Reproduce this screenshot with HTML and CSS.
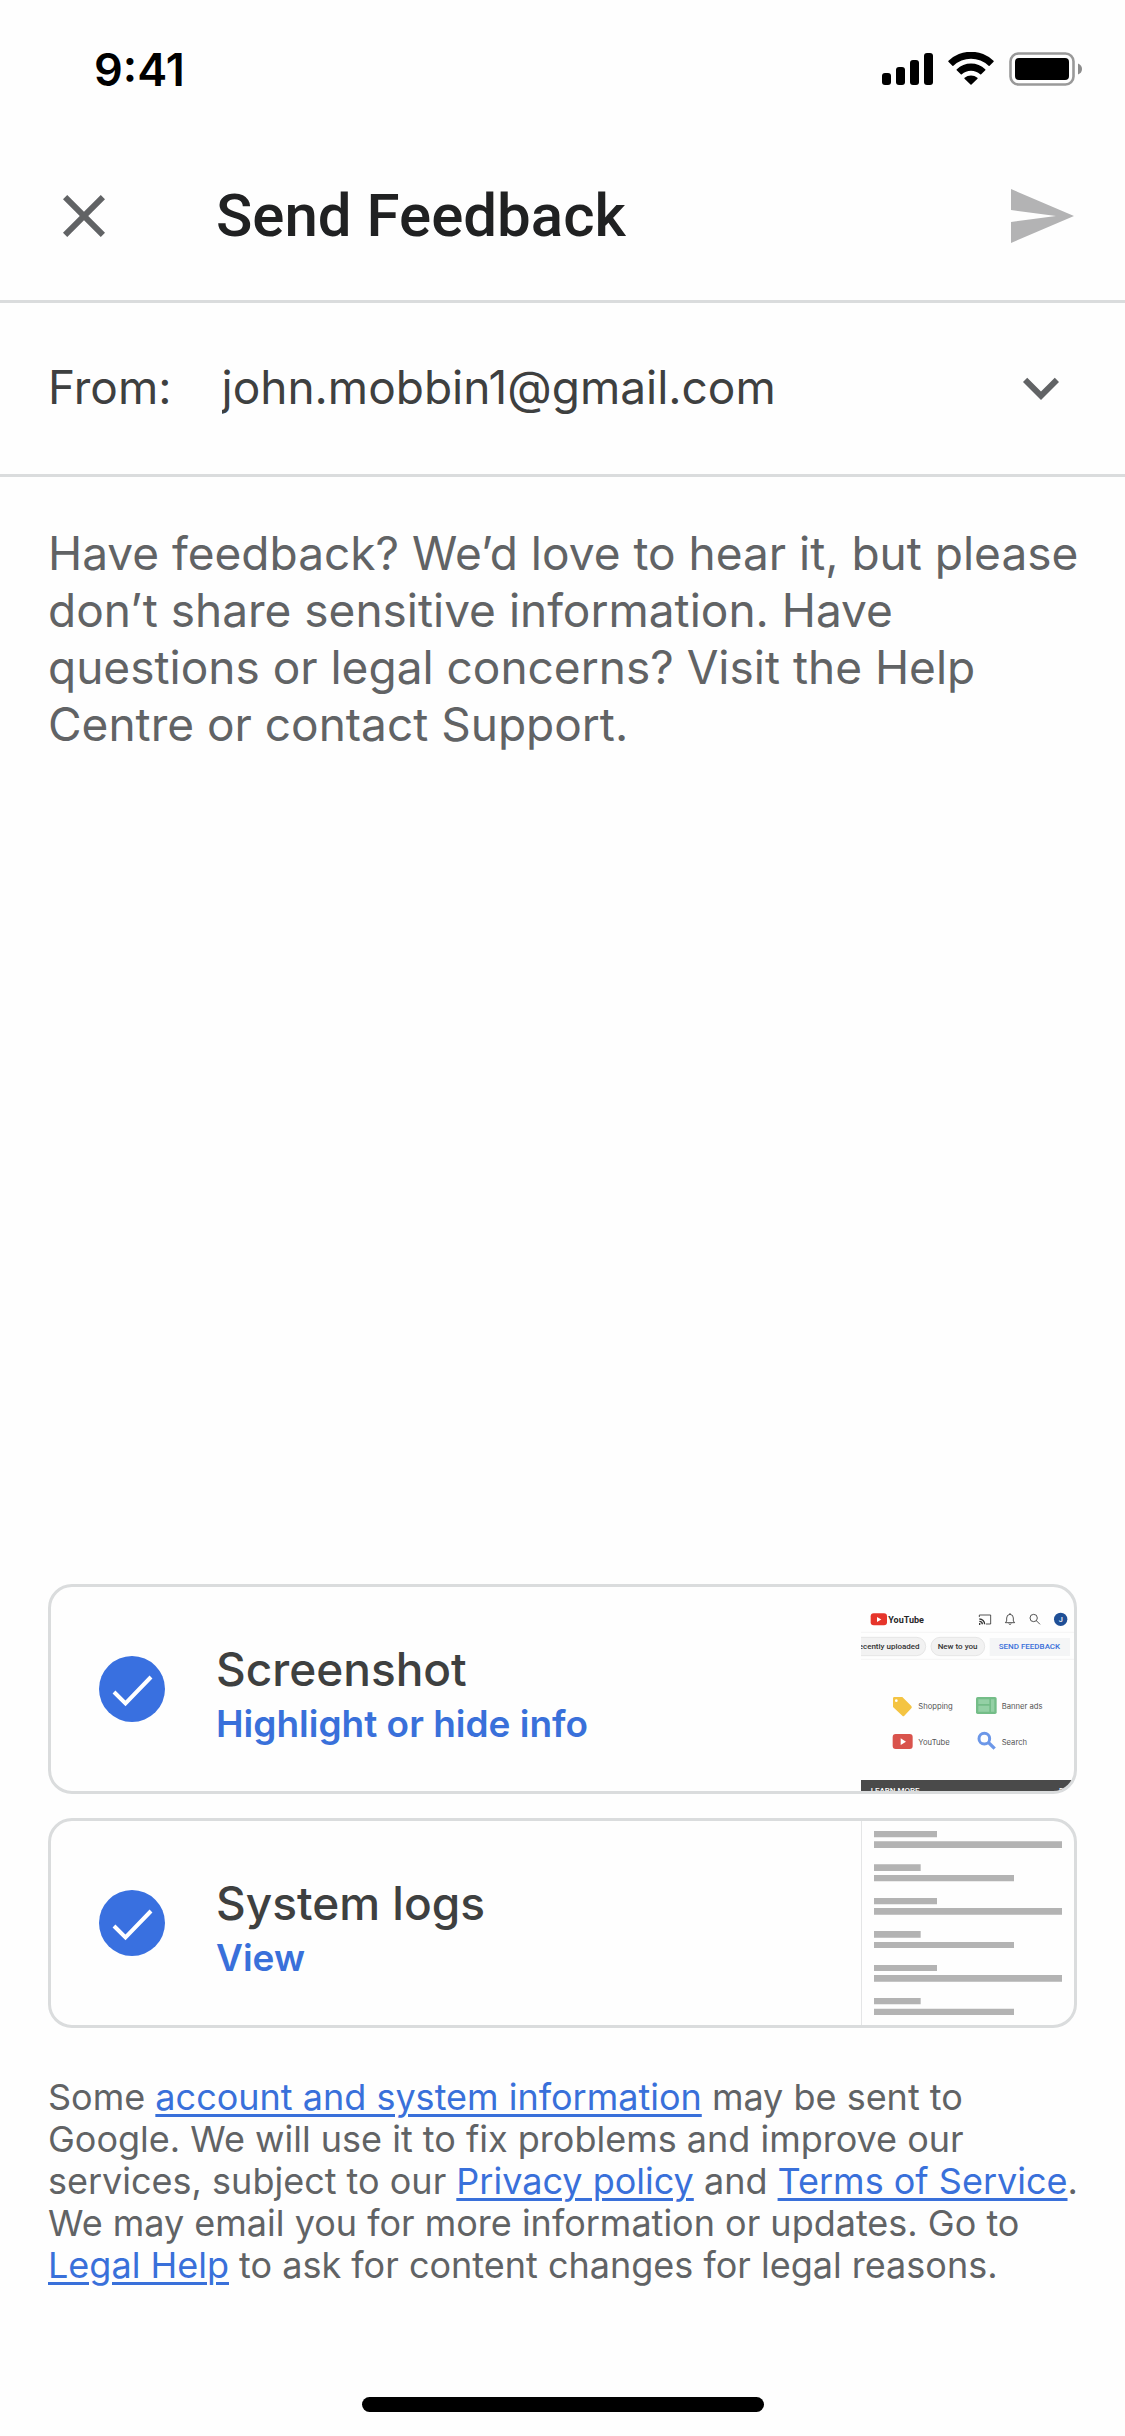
FILE: index.html
```html
<!DOCTYPE html>
<html lang="en">
<head>
<meta charset="utf-8">
<meta name="viewport" content="width=device-width">
<title>Send Feedback</title>
<link rel="stylesheet" href="styles.css">
</head>
<body>
<div class="status-bar">
  <span class="time">9:41</span>
  <div class="status-icons">
    <svg width="51" height="34" viewBox="0 0 51 34" role="img" aria-label="Signal"><rect y="21" width="9" height="12" rx="3"/><rect x="14" y="15" width="9" height="18" rx="3"/><rect x="28" y="8" width="9" height="25" rx="3"/><rect x="42" y="1" width="9" height="32" rx="3"/></svg>
    <svg width="46" height="34" viewBox="0 0 46 34" role="img" aria-label="Wi-Fi"><path d="M0.4 9.7Q0 9.3.5 8.800A32.500 32.500 0 0 1 45.500 8.800Q46 9.300 45.600 9.700L41.600 13.800Q41.100 14.200 40.600 13.800A25.500 25.500 0 0 0 5.400 13.800Q4.900 14.200 4.400 13.800ZM8.700 18.200Q8.300 17.700 8.800 17.300A20.600 20.600 0 0 1 37.200 17.300Q37.700 17.700 37.300 18.200L33.200 22.300Q32.700 22.700 32.200 22.300A13.700 13.700 0 0 0 13.800 22.300Q13.300 22.700 12.800 22.300ZM16.500 26.700Q16.100 26.200 16.600 25.800A9.800 9.800 0 0 1 29.400 25.800Q29.900 26.200 29.500 26.700L23.500 32.600Q23 33 22.500 32.600Z"/></svg>
    <svg width="73" height="34" viewBox="0 0 73 34" role="img" aria-label="Battery"><rect x="1.500" y="1.500" width="63" height="31" rx="8" fill="none" stroke="#999" stroke-width="2.600"/><rect x="6" y="6" width="54" height="22" rx="4"/><path d="M69 11.500Q73 13 73 17T69 22.500Z" fill="#8c8c8c"/></svg>
  </div>
</div>

<form class="feedback">
  <header class="app-bar">
    <button type="button" class="icon-button close" aria-label="Close">
      <svg viewBox="0 0 24 24"><path d="M19 6.410L17.590 5 12 10.590 6.410 5 5 6.410 10.590 12 5 17.590 6.410 19 12 13.410 17.590 19 19 17.590 13.410 12z"/></svg>
    </button>
    <h1 class="title">Send Feedback</h1>
    <button type="submit" class="icon-button send" aria-label="Send">
      <svg viewBox="0 0 24 24"><path d="M2 21L23 12 2 3V10L17 12 2 14z"/></svg>
    </button>
  </header>

  <div class="from-row">
    <label for="from">From:</label>
    <select id="from" class="from-select"><option>john.mobbin1@gmail.com</option></select>
    <svg class="chevron" viewBox="0 0 24 24" aria-hidden="true"><path d="M16.590 8.590L12 13.170 7.410 8.590 6 10l6 6 6-6z"/></svg>
  </div>

  <textarea class="message" aria-label="Feedback" placeholder="Have feedback? We’d love to hear it, but please don’t share sensitive information. Have questions or legal concerns? Visit the Help Centre or contact Support."></textarea>

  <div class="attachments">
    <section class="card">
      <span class="check">
        <input type="checkbox" id="shot" checked>
        <svg viewBox="0 0 66 66" aria-hidden="true"><path d="M15 36L26.500 47.500 52 21" fill="none" stroke="#fff" stroke-width="4"/></svg>
      </span>
      <div class="card-text">
        <label for="shot">Screenshot</label>
        <a href="#highlight">Highlight or hide info</a>
      </div>
      <svg class="thumb" viewBox="0 0 639 612" role="img" aria-label="Screenshot preview">
        <rect x="29" y="79" width="49" height="36" rx="9" fill="#e6352b"/><path d="M48 90V105L61 97.500z" fill="#fff"/>
        <text x="82" y="108" class="t-logo">YouTube</text>
        <g fill="none" stroke="#333" stroke-width="2.500">
          <path d="M355 90V84H389V111H375"/><path d="M355 96A16 16 0 0 1 371 112M355 103A9 9 0 0 1 364 112" stroke-width="4"/>
          <path d="M433 107H461L457 102V93Q457 83 447 82Q437 83 437 93V102ZM443 110Q447 115 451 110M447 82V78"/>
          <circle cx="518" cy="93" r="11"/><path d="M526 101L537 112"/>
        </g>
        <path d="M354 109h4v4h-4z"/>
        <circle cx="599" cy="97" r="20" fill="#1f4f96"/><text x="599" y="105" class="t-avatar">J</text>
        <path d="M0 136H639M0 217H639" stroke="#eee" stroke-width="2"/>
        <rect x="-60" y="151" width="254" height="55" rx="27" fill="#f2f2f2" stroke="#ddd" stroke-width="2"/>
        <rect x="210" y="151" width="161" height="55" rx="27" fill="#f2f2f2" stroke="#ddd" stroke-width="2"/>
        <rect x="386" y="153" width="241" height="54" fill="#f4f5f6"/>
        <text x="-7" y="186" class="t-chip">ecently uploaded</text>
        <text x="230" y="186" class="t-chip">New to you</text>
        <text x="413" y="187" class="t-send">SEND FEEDBACK</text>
        <path d="M96 334Q96 330 100 330H124L151 357Q154 361 151 364L130 386Q127 389 124 386L96 360Z" fill="#f4c443"/><circle cx="106" cy="341" r="4" fill="#fff"/>
        <rect x="345" y="330" width="62" height="51" rx="5" fill="#74bd88"/><path d="M352 337H385V351H352ZM352 356H385V374H352ZM390 337H400V374H390Z" fill="#94d0a5"/>
        <rect x="95" y="441" width="60" height="45" rx="9" fill="#d9534c"/><path d="M119 454V474L135 464z" fill="#fff"/>
        <g fill="none" stroke="#6c97e8"><circle cx="370" cy="455" r="16" stroke-width="9"/><path d="M382 466L401 485" stroke-width="10"/></g>
        <text x="172" y="365" class="t-label">Shopping</text>
        <text x="422" y="365" class="t-label">Banner ads</text>
        <text x="172" y="473" class="t-label">YouTube</text>
        <text x="422" y="473" class="t-label">Search</text>
        <rect y="579" width="639" height="33" fill="#4a4a4a"/>
        <text x="29" y="618" class="t-foot">LEARN MORE</text>
        <text x="594" y="618" class="t-foot">FE</text>
      </svg>
    </section>

    <section class="card">
      <span class="check">
        <input type="checkbox" id="logs" checked>
        <svg viewBox="0 0 66 66" aria-hidden="true"><path d="M15 36L26.500 47.500 52 21" fill="none" stroke="#fff" stroke-width="4"/></svg>
      </span>
      <div class="card-text">
        <label for="logs">System logs</label>
        <a href="#logs">View</a>
      </div>
      <svg class="thumb" viewBox="0 0 639 612" role="img" aria-label="System logs preview">
        <path d="M1.500 0V612" stroke="#e4e5e6" stroke-width="3"/>
        <path fill="#b3b3b3" d="M39 30h189v19H39zM39 61h564v20H39zM39 130h140v20H39zM39 162h420v19H39zM39 231h189v19H39zM39 261h564v20H39zM39 330h140v20H39zM39 363h420v18H39zM39 432h189v18H39zM39 462h564v20H39zM39 531h140v19H39zM39 563h420v19H39z"/>
      </svg>
    </section>
  </div>

  <p class="legal">Some <a href="#info">account and system information</a> may be sent to Google. We will use it to fix problems and improve our services, subject to our <a href="#privacy">Privacy policy</a> and <a href="#terms">Terms of Service</a>. We may email you for more information or updates. Go to <a href="#help">Legal Help</a> to ask for content changes for legal reasons.</p>
</form>
<div class="home-indicator"></div>
</body>
</html>
```
FILE: styles.css
```css
* { box-sizing: border-box; }

body {
  margin: 0;
  min-height: 100vh;
  display: flex;
  flex-direction: column;
  background: #fefefe;
  color: #3e4040;
  font-family: Inter, "Liberation Sans", sans-serif;
}

button, select, textarea, input { font: inherit; color: inherit; }

.status-bar {
  display: flex;
  align-items: center;
  justify-content: space-between;
  height: 132px;
  padding: 6px 43px 0 94px;
  color: #000;
}
.time { font-size: 45px; font-weight: 600; }
.status-icons { display: flex; gap: 15px; }

.feedback { flex: 1; display: flex; flex-direction: column; }

.app-bar {
  display: flex;
  align-items: center;
  height: 171px;
  padding: 0 48px;
  border-bottom: 3px solid #dadcdd;
}
.icon-button {
  width: 72px;
  height: 72px;
  padding: 0;
  border: 0;
  background: none;
}
.icon-button svg { display: block; fill: currentColor; }
.close { color: #616365; }
.send { color: #b3b3b4; }
.title {
  flex: 1;
  margin: 0 0 0 96px;
  font: 500 60px/72px Roboto, sans-serif;
  color: #202122;
}

.from-row {
  display: flex;
  align-items: center;
  height: 174px;
  padding: 0 48px 2px;
  border-bottom: 3px solid #dadcdd;
  font-size: 46px;
}
.from-row label { padding-bottom: 2px; }
.from-select {
  flex: 1;
  margin-left: 50px;
  padding: 0 0 2px;
  border: 0;
  background: none;
  appearance: none;
}
.chevron { width: 72px; height: 72px; fill: #616365; }

.message {
  flex: 1;
  width: 100%;
  padding: 48px 32px 48px 48px;
  border: 0;
  background: none;
  resize: none;
  font-size: 46px;
  line-height: 57px;
}
.message::placeholder { color: #616365; opacity: 1; }

.attachments {
  display: flex;
  flex-direction: column;
  gap: 24px;
  padding: 0 48px;
}
.card {
  display: flex;
  align-items: center;
  height: 210px;
  padding-left: 48px;
  overflow: hidden;
  border: 3px solid #dadcdd;
  border-radius: 24px;
}
.check { display: grid; width: 66px; height: 66px; }
.check > * { grid-area: 1 / 1; width: 66px; height: 66px; }
.check input {
  margin: 0;
  appearance: none;
  border-radius: 50%;
  background: #3970e0;
}
.check svg { pointer-events: none; }
.card-text {
  flex: 1;
  display: flex;
  flex-direction: column;
  align-items: flex-start;
  margin-left: 51px;
  padding-top: 10px;
  font-weight: 500;
}
.card-text label { font-size: 46px; line-height: 60px; }
.card-text a {
  font-size: 37px;
  line-height: 50px;
  font-weight: 600;
  color: #3970da;
  text-decoration: none;
}
.thumb { width: 213px; height: 204px; }

.t-logo { font: 700 27px Roboto, sans-serif; fill: #282828; }
.t-avatar { font: 500 22px Roboto, sans-serif; fill: #fff; text-anchor: middle; }
.t-chip { font: 500 24px Roboto, sans-serif; fill: #333; }
.t-send { font: 500 24px Roboto, sans-serif; fill: #3970da; }
.t-label { font: 400 23px Inter, sans-serif; fill: #555; }
.t-foot { font: 500 24px Roboto, sans-serif; fill: #fff; }

.legal {
  margin: 48px 40px 111px 48px;
  font-size: 36px;
  line-height: 42px;
  color: #616365;
}
.legal a {
  color: #3970da;
  text-decoration-thickness: 3px;
  text-underline-offset: 4px;
}

.home-indicator {
  width: 402px;
  height: 15px;
  margin: 0 auto 24px;
  border-radius: 8px;
  background: #000;
}
```
